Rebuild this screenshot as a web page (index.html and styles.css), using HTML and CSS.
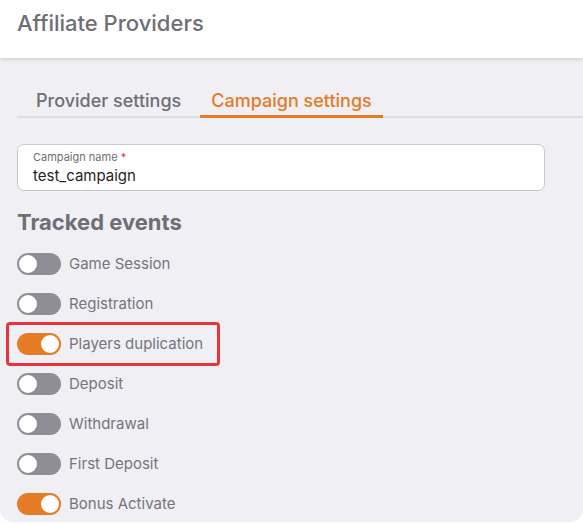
FILE: index.html
```html
<!DOCTYPE html>
<html>
<head>
<meta charset="utf-8">
<link rel="stylesheet" href="styles.css">
</head>
<body>
<div class="header"><h1 class="title">Affiliate Providers</h1></div>
<div class="panel">
  <div class="tabs">
    <div class="tab">Provider settings</div>
    <div class="tab active">Campaign settings</div>
  </div>
  <div class="field">
    <div class="label">Campaign name <span class="req">*</span></div>
    <div class="value">test_campaign</div>
  </div>
  <h2 class="section">Tracked events</h2>
  <div class="events">
    <div class="event"><span class="toggle"><span class="knob"></span></span><span class="name">Game Session</span></div>
    <div class="event"><span class="toggle"><span class="knob"></span></span><span class="name">Registration</span></div>
    <div class="event highlight"><span class="toggle on"><span class="knob"></span></span><span class="name">Players duplication</span></div>
    <div class="event"><span class="toggle"><span class="knob"></span></span><span class="name">Deposit</span></div>
    <div class="event"><span class="toggle"><span class="knob"></span></span><span class="name">Withdrawal</span></div>
    <div class="event"><span class="toggle"><span class="knob"></span></span><span class="name">First Deposit</span></div>
    <div class="event"><span class="toggle on"><span class="knob"></span></span><span class="name">Bonus Activate</span></div>
  </div>
</div>
</body>
</html>
```
FILE: styles.css
```css
* { box-sizing: border-box; }
html, body { margin: 0; padding: 0; background: #ffffff; }
body { font-family: Inter, "Noto Sans", sans-serif; width: 583px; height: 524px; overflow: hidden; }
.header {
  height: 58px;
  background: #ffffff;
  box-shadow: 0 1px 4px rgba(0,0,0,0.18);
  position: relative;
  z-index: 1;
  padding: 9px 0 0 17px;
}
.title { margin: 0; font-size: 22px; font-weight: 500; color: #6f6e75; line-height: 28px; }
.panel {
  height: 464px;
  background: #f0eff4;
  border-radius: 0 0 13px 13px;
  padding: 28px 0 0 17px;
}
.tabs {
  display: flex;
  gap: 8px;
  padding-left: 8px;
  border-bottom: 2px solid #dedde3;
  height: 32px;
}
.tab {
  padding: 0 11px;
  font-size: 18px;
  line-height: 29px;
  color: #6f6e75;
  font-weight: 500;
  white-space: nowrap;
}
.tab.active {
  color: #e57b25;
  border-bottom: 3px solid #e57b25;
  margin-bottom: -2px;
}
.field {
  margin-top: 26px;
  width: 528px;
  height: 47px;
  background: #ffffff;
  border: 1px solid #c9c8cd;
  border-radius: 7px;
  padding: 5px 0 0 15px;
}
.label { font-size: 11px; color: #707070; line-height: 14px; }
.req { color: #e53935; }
.value { font-size: 15px; color: #1f1f1f; line-height: 20px; margin-top: 2px; }
.section {
  margin: 17px 0 0 0;
  font-size: 22px;
  font-weight: 700;
  color: #6f6e75;
  line-height: 28px;
}
.events { display: flex; flex-direction: column; gap: 18px; margin-top: 17px; }
.event { display: flex; align-items: center; gap: 8px; height: 22px; }
.event.highlight {
  margin: -11px 0 -11px -11px;
  padding: 0 0 0 8px;
  width: 214px;
  height: 44px;
  border: 3px solid #e8353b;
  border-radius: 4px;
}
.toggle {
  width: 44px;
  height: 22px;
  border-radius: 11px;
  background: #8f8d95;
  padding: 2px;
  display: flex;
  flex-shrink: 0;
}
.toggle.on { background: #e57b25; justify-content: flex-end; }
.knob { width: 18px; height: 18px; border-radius: 50%; background: #ffffff; }
.name { font-size: 15px; color: #76757c; line-height: 20px; }
```
